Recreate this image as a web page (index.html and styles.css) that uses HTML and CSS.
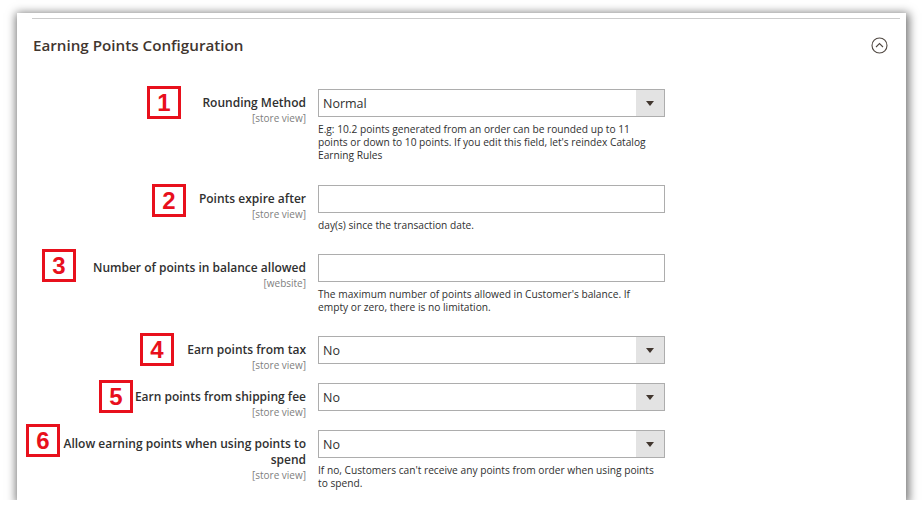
FILE: index.html
```html
<!DOCTYPE html>
<html lang="en">
<head>
<meta charset="utf-8">
<title>Earning Points Configuration</title>
<link rel="stylesheet" href="styles.css">
</head>
<body>
<div class="panel">
  <div class="topline"></div>
  <div class="header">
    <h2 class="title">Earning Points Configuration</h2>
    <svg class="collapse" width="17" height="17" viewBox="0 0 17 17">
      <circle cx="8.5" cy="8.5" r="7.5" fill="none" stroke="#514943" stroke-width="1.1"/>
      <path d="M5 10 L8.5 6.5 L12 10" fill="none" stroke="#514943" stroke-width="1.1"/>
    </svg>
  </div>
  <div class="rows">
    <div class="row">
      <div class="label"><span class="ltext">Rounding Method</span><span class="scope">[store view]</span></div>
      <div class="control">
        <div class="select"><span class="value">Normal</span><span class="arrow"></span></div>
        <div class="note">E.g: 10.2 points generated from an order can be rounded up to 11 points or down to 10 points. If you edit this field, let's reindex Catalog Earning Rules</div>
      </div>
    </div>
    <div class="row">
      <div class="label"><span class="ltext">Points expire after</span><span class="scope">[store view]</span></div>
      <div class="control">
        <div class="input"></div>
        <div class="note">day(s) since the transaction date.</div>
      </div>
    </div>
    <div class="row">
      <div class="label"><span class="ltext">Number of points in balance allowed</span><span class="scope">[website]</span></div>
      <div class="control">
        <div class="input"></div>
        <div class="note">The maximum number of points allowed in Customer's balance. If empty or zero, there is no limitation.</div>
      </div>
    </div>
    <div class="row">
      <div class="label"><span class="ltext">Earn points from tax</span><span class="scope">[store view]</span></div>
      <div class="control">
        <div class="select"><span class="value">No</span><span class="arrow"></span></div>
      </div>
    </div>
    <div class="row">
      <div class="label"><span class="ltext">Earn points from shipping fee</span><span class="scope">[store view]</span></div>
      <div class="control">
        <div class="select"><span class="value">No</span><span class="arrow"></span></div>
      </div>
    </div>
    <div class="row">
      <div class="label"><span class="ltext">Allow earning points when using points to spend</span><span class="scope">[store view]</span></div>
      <div class="control">
        <div class="select"><span class="value">No</span><span class="arrow"></span></div>
        <div class="note">If no, Customers can't receive any points from order when using points to spend.</div>
      </div>
    </div>
  </div>
  <div class="badge badge-1">1</div>
  <div class="badge badge-2">2</div>
  <div class="badge badge-3">3</div>
  <div class="badge badge-4">4</div>
  <div class="badge badge-5">5</div>
  <div class="badge badge-6">6</div>
</div>
</body>
</html>
```
FILE: styles.css
```css
html, body {
  margin: 0;
  padding: 0;
  background: #ffffff;
}
body {
  font-family: "Open Sans", "Liberation Sans", sans-serif;
  color: #303030;
}
.panel {
  position: relative;
  box-sizing: border-box;
  margin: 13px 0 0 17px;
  width: 889px;
  height: 487px;
  background: #ffffff;
  padding: 5px 6px 0 15px;
  box-shadow: 1px 2px 9px 2px rgba(0, 0, 0, 0.55);
}
.topline {
  height: 1px;
  background: #cccccc;
}
.header {
  display: flex;
  align-items: center;
  justify-content: space-between;
  padding: 16px 12px 0 1px;
}
.title {
  margin: 0;
  font-size: 15.2px;
  line-height: 20px;
  font-weight: 600;
  color: #41362f;
}
.collapse {
  display: block;
}
.rows {
  padding-top: 34px;
}
.row {
  display: flex;
  align-items: flex-start;
  gap: 12px;
  margin-bottom: 19px;
}
.label {
  width: 274px;
  box-sizing: border-box;
  padding-top: 6px;
  text-align: right;
  display: flex;
  flex-direction: column;
  margin-bottom: -8px;
}
.ltext {
  font-size: 12px;
  line-height: 16px;
  font-weight: 600;
  color: #303030;
}
.scope {
  margin-top: 1px;
  font-size: 10px;
  line-height: 12px;
  color: #808080;
}
.control {
  width: 347px;
}
.select, .input {
  box-sizing: border-box;
  height: 28px;
  border: 1px solid #adadad;
  background: #ffffff;
  display: flex;
  align-items: center;
}
.value {
  flex: 1;
  padding-left: 4px;
  font-size: 12.5px;
  color: #303030;
}
.arrow {
  align-self: stretch;
  width: 28px;
  background: #e3e3e3;
  position: relative;
}
.arrow::after {
  content: "";
  position: absolute;
  left: 10px;
  top: 11px;
  border-left: 4px solid transparent;
  border-right: 4px solid transparent;
  border-top: 5px solid #41362f;
}
.note {
  margin-top: 6px;
  padding-bottom: 3px;
  padding-right: 6px;
  font-size: 10.2px;
  line-height: 13.2px;
  color: #303030;
}
.badge {
  position: absolute;
  box-sizing: border-box;
  width: 34px;
  height: 33px;
  border: 3px solid #e8101c;
  background: #ffffff;
  color: #e8101c;
  font-family: "Liberation Sans", Arial, sans-serif;
  font-weight: 700;
  font-size: 24px;
  line-height: 27px;
  text-align: center;
}
.badge-1 { left: 130px; top: 73px; }
.badge-2 { left: 135px; top: 171px; }
.badge-3 { left: 25px; top: 236px; }
.badge-4 { left: 123px; top: 320px; }
.badge-5 { left: 82px; top: 367px; }
.badge-6 { left: 9px; top: 411px; }
```
